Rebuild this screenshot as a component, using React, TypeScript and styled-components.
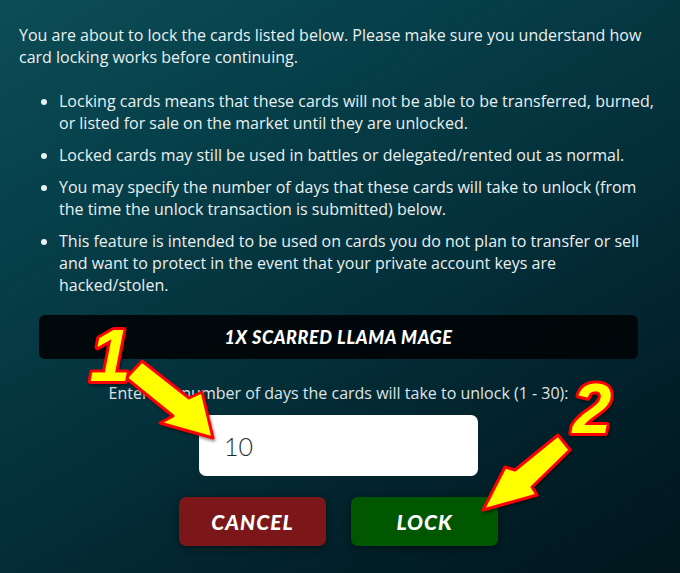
import React from "react";
import styled, { createGlobalStyle } from "styled-components";

const Global = createGlobalStyle`
  html, body { margin: 0; padding: 0; }
  body { background: #04303a; }
`;

const Page = styled.div`
  position: relative;
  width: 680px;
  height: 573px;
  overflow: hidden;
  box-sizing: border-box;
  padding: 24px 22px 0 19px;
  background: linear-gradient(150deg, #0c4d56 0%, #06404a 25%, #042f39 55%, #021f28 80%, #01161d 100%);
  font-family: "Open Sans", "Noto Sans", sans-serif;
  color: #eaf0f2;
  display: flex;
  flex-direction: column;
`;

const Intro = styled.p`
  margin: 0 0 22px 0;
  font-size: 16px;
  line-height: 22px;
`;

const List = styled.ul`
  margin: 0 0 19px 0;
  padding-left: 40px;
`;

const Item = styled.li`
  font-size: 16px;
  line-height: 22px;
  margin-bottom: 10px;
  &:last-child { margin-bottom: 0; }
`;

const CardBox = styled.div`
  margin: 0 20px;
  height: 44px;
  border-radius: 6px;
  background: rgba(0, 4, 6, 0.92);
  display: flex;
  align-items: center;
  justify-content: center;
  font-family: "Lato", "Liberation Sans", sans-serif;
  font-weight: 900;
  font-style: italic;
  font-size: 18px;
  letter-spacing: 0.6px;
  color: #ffffff;
`;

const Label = styled.div`
  margin-top: 23px;
  text-align: center;
  font-size: 16px;
  line-height: 22px;
  color: #dde5e8;
`;

const InputRow = styled.div`
  display: flex;
  justify-content: center;
  margin-top: 11px;
`;

const DaysInput = styled.div`
  width: 279px;
  height: 61px;
  box-sizing: border-box;
  background: #ffffff;
  border-radius: 7px;
  padding-left: 25px;
  display: flex;
  align-items: center;
  font-family: "Lato", "Liberation Sans", sans-serif;
  font-weight: 300;
  font-size: 25px;
  color: #1e2d33;
`;

const Buttons = styled.div`
  display: flex;
  justify-content: center;
  gap: 25px;
  margin-top: 21px;
`;

const Btn = styled.button<{ $tone: "red" | "green" }>`
  width: 147px;
  height: 49px;
  border: none;
  border-radius: 7px;
  background: ${(p) => (p.$tone === "red" ? "#7b1719" : "#005700")};
  box-shadow: 0 2px 8px rgba(0, 0, 0, 0.45);
  color: #ffffff;
  font-family: "Lato", "Liberation Sans", sans-serif;
  font-weight: 900;
  font-style: italic;
  font-size: 21px;
  letter-spacing: 1px;
  padding: 0;
`;

const Overlay = styled.svg`
  position: absolute;
  left: 0;
  top: 0;
  pointer-events: none;
`;

const Num = styled.text`
  font-family: "Liberation Sans", Arial, sans-serif;
  font-weight: 700;
  font-style: italic;
  fill: #ffff00;
  stroke: #ff0000;
  stroke-width: 6px;
  stroke-linejoin: round;
  paint-order: stroke;
`;

export default function App() {
  return (
    <>
      <Global />
      <Page>
        <Intro>
          You are about to lock the cards listed below. Please make sure you understand how card locking works before
          continuing.
        </Intro>
        <List>
          <Item>
            Locking cards means that these cards will not be able to be transferred, burned, or listed for sale on the
            market until they are unlocked.
          </Item>
          <Item>Locked cards may still be used in battles or delegated/rented out as normal.</Item>
          <Item>
            You may specify the number of days that these cards will take to unlock (from the time the unlock
            transaction is submitted) below.
          </Item>
          <Item>
            This feature is intended to be used on cards you do not plan to transfer or sell and want to protect in the
            event that your private account keys are hacked/stolen.
          </Item>
        </List>
        <CardBox>1X SCARRED LLAMA MAGE</CardBox>
        <Label>Enter the number of days the cards will take to unlock (1 - 30):</Label>
        <InputRow>
          <DaysInput>10</DaysInput>
        </InputRow>
        <Buttons>
          <Btn $tone="red">CANCEL</Btn>
          <Btn $tone="green">LOCK</Btn>
        </Buttons>
        <Overlay width="680" height="573" viewBox="0 0 680 573">
          <defs>
            <filter id="sh" x="-20%" y="-20%" width="140%" height="140%">
              <feDropShadow dx="1" dy="2" stdDeviation="1.5" floodColor="#000" floodOpacity="0.45" />
            </filter>
          </defs>
          <g filter="url(#sh)">
            <polygon
              points="142,361 189,398 202,392 213,438 160,423 173,416 126,378"
              fill="#ffff00"
              stroke="#ff0000"
              strokeWidth="3"
              strokeLinejoin="round"
            />
            <polygon
              points="558,435 570,450 532,487 537,495 483,510 505,467 515,470"
              fill="#ffff00"
              stroke="#ff0000"
              strokeWidth="3"
              strokeLinejoin="round"
            />
            <Num x="110" y="381" fontSize="74" textAnchor="middle">1</Num>
            <Num x="592" y="433" fontSize="70" textAnchor="middle">2</Num>
          </g>
        </Overlay>
      </Page>
    </>
  );
}
